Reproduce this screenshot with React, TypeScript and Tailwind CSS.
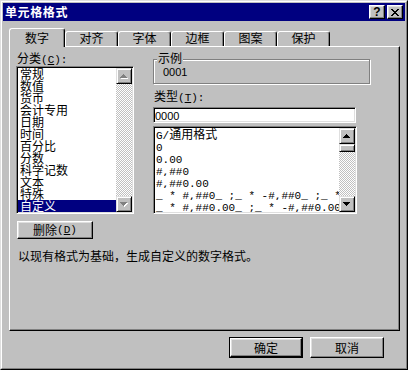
import React from "react";

const raised =
  "border border-t-white border-l-white border-r-black border-b-black shadow-[inset_-1px_-1px_0_#808080,inset_1px_1px_0_#dfdfdf]";
const sunken =
  "border border-t-[#808080] border-l-[#808080] border-r-white border-b-white shadow-[inset_1px_1px_0_#000,inset_-1px_-1px_0_#dfdfdf]";
const sbBtn =
  "w-4 h-4 shrink-0 bg-[#c0c0c0] border border-t-[#dfdfdf] border-l-[#dfdfdf] border-r-black border-b-black shadow-[inset_1px_1px_0_#fff,inset_-1px_-1px_0_#808080] flex items-center justify-center";
const thumb =
  "w-4 h-[8px] shrink-0 bg-[#c0c0c0] border border-t-[#dfdfdf] border-l-[#dfdfdf] border-r-black border-b-black shadow-[inset_1px_1px_0_#fff,inset_-1px_-1px_0_#808080]";
const track =
  "flex-1 bg-[image:repeating-conic-gradient(#c0c0c0_0%_25%,#ffffff_0%_50%)] bg-[length:2px_2px]";
const mono = "font-['Liberation_Mono',monospace] text-[11px]";
const sans = "font-['Liberation_Sans',sans-serif] text-[11px]";

function Arrow({ down, disabled }: { down?: boolean; disabled?: boolean }) {
  const d = down
    ? "M0 0H7V1H6V2H5V3H4V4H3V3H2V2H1V1H0Z"
    : "M3 0H4V1H5V2H6V3H7V4H0V3H1V2H2V1H3Z";
  return (
    <svg width="8" height="5" viewBox="0 0 8 5" className="block">
      {disabled && <path d={d} fill="#fff" transform="translate(1 1)" />}
      <path d={d} fill={disabled ? "#808080" : "#000"} />
    </svg>
  );
}

const xRows = ["11....11", ".11..11.", "..1111..", "...11...", "..1111..", ".11..11.", "11....11"];

function CloseGlyph() {
  return (
    <svg width="8" height="7" viewBox="0 0 8 7" className="block">
      {xRows.flatMap((row, y) =>
        row.split("").map((c, x) => (c === "1" ? <rect key={`${x}-${y}`} x={x} y={y} width="1" height="1" fill="#000" /> : null))
      )}
    </svg>
  );
}

function TitleBar() {
  return (
    <div className="h-[18px] shrink-0 bg-[#000080] flex items-center justify-between pl-[2px] pr-[2px]">
      <span className="text-white font-bold text-[12px] leading-[12px] tracking-[0.6px]">单元格格式</span>
      <div className="flex gap-[2px]">
        <div className={`w-4 h-[14px] bg-[#c0c0c0] ${raised} flex items-center justify-center`}>
          <span className="font-['Liberation_Sans',sans-serif] font-bold text-[12px] leading-none">?</span>
        </div>
        <div className={`w-4 h-[14px] bg-[#c0c0c0] ${raised} flex items-center justify-center`}>
          <CloseGlyph />
        </div>
      </div>
    </div>
  );
}

const tabs = ["数字", "对齐", "字体", "边框", "图案", "保护"];

function Tabs() {
  return (
    <div className="flex items-end h-[25px] pl-[6px] shrink-0">
      {tabs.map((t, i) =>
        i === 0 ? (
          <div
            key={t}
            className="relative z-10 -mb-px h-[19px] w-[56px] bg-[#c0c0c0] border-t border-l border-r border-t-white border-l-white border-r-black rounded-t-[3px] shadow-[inset_-1px_0_0_#808080] pt-[3px] text-center"
          >
            {t}
          </div>
        ) : (
          <div
            key={t}
            className="h-[15px] w-[53px] border-t border-l border-r border-t-white border-l-white border-r-black rounded-t-[3px] shadow-[inset_-1px_0_0_#808080] text-center"
          >
            {t}
          </div>
        )
      )}
    </div>
  );
}

const categories = ["常规", "数值", "货币", "会计专用", "日期", "时间", "百分比", "分数", "科学记数", "文本", "特殊", "自定义"];

function CategoryList() {
  return (
    <div className={`h-[148px] w-[118px] bg-white ${sunken} p-px flex`}>
      <div className="flex-1 flex flex-col">
        {categories.map((c, i) => (
          <div
            key={c}
            className={`h-[12px] pl-[2px] whitespace-nowrap ${i === categories.length - 1 ? "bg-[#000080] text-white" : ""}`}
          >
            {c}
          </div>
        ))}
      </div>
      <div className="w-4 flex flex-col">
        <div className={sbBtn}>
          <Arrow disabled />
        </div>
        <div className={track} />
        <div className={sbBtn}>
          <Arrow down disabled />
        </div>
      </div>
    </div>
  );
}

const formats: React.ReactNode[] = [
  <>
    <span className={mono}>G/</span>通用格式
  </>,
  <span className={mono}>0</span>,
  <span className={mono}>0.00</span>,
  <span className={mono}>#,##0</span>,
  <span className={mono}>#,##0.00</span>,
  <span className={mono}>{'_ * #,##0_ ;_ * -#,##0_ ;_ * "-"_ ;_ @_ '}</span>,
  <span className={mono}>{'_ * #,##0.00_ ;_ * -#,##0.00_ ;_ * "-"??_ ;_ @_ '}</span>,
];

function FormatList() {
  return (
    <div className={`h-[88px] w-[204px] bg-white ${sunken} p-px flex`}>
      <div className="flex-1 min-w-0 flex flex-col overflow-hidden">
        {formats.map((f, i) => (
          <div key={i} className="h-[12px] pl-px whitespace-pre overflow-hidden">
            {f}
          </div>
        ))}
      </div>
      <div className="w-4 flex flex-col">
        <div className={sbBtn}>
          <Arrow />
        </div>
        <div className={thumb} />
        <div className={track} />
        <div className={sbBtn}>
          <Arrow down />
        </div>
      </div>
    </div>
  );
}

function Panel() {
  return (
    <div className="ml-[6px] w-[391px] h-[285px] shrink-0 border border-t-white border-l-white border-r-black border-b-black shadow-[inset_-1px_-1px_0_#808080] pt-[5px] pl-[6px] flex flex-col">
      <div className="flex gap-[19px]">
        <div className="flex flex-col">
          <div className="h-[14px] pl-px whitespace-nowrap">
            分类<span className={mono}>(<u>C</u>):</span>
          </div>
          <CategoryList />
        </div>
        <div className="flex flex-col">
          <div className="relative mt-[7px] h-[25px] w-[217px] border border-[#808080] shadow-[inset_1px_1px_0_#fff,1px_1px_0_#fff] pl-[9px] pt-[5px]">
            <span className="absolute left-[3px] top-[-8px] px-px bg-[#c0c0c0]">示例</span>
            <span className={sans}>0001</span>
          </div>
          <div className="mt-[6px] h-[12px] pl-px whitespace-nowrap">
            类型<span className={mono}>(<u>T</u>):</span>
          </div>
          <div className={`mt-[5px] h-[16px] w-[203px] bg-white ${sunken} pl-px pt-px`}>
            <span className={sans}>0000</span>
          </div>
          <div className="mt-[3px]">
            <FormatList />
          </div>
        </div>
      </div>
      <div className={`mt-[7px] ml-px h-[18px] w-[76px] ${raised} flex items-center justify-center whitespace-nowrap`}>
        删除<span className={mono}>(<u>D</u>)</span>
      </div>
      <div className="mt-[11px] pl-[2px] whitespace-nowrap">以现有格式为基础，生成自定义的数字格式。</div>
    </div>
  );
}

export default function App() {
  return (
    <div className="w-[408px] h-[370px] border border-t-[#dfdfdf] border-l-[#dfdfdf] border-r-black border-b-black bg-[#c0c0c0] font-['Noto_Sans_CJK_SC',sans-serif] text-[12px] leading-[12px] text-black select-none">
      <div className="h-full border border-t-white border-l-white border-r-[#808080] border-b-[#808080] p-px flex flex-col">
        <TitleBar />
        <Tabs />
        <Panel />
        <div className="mt-[6px] flex justify-end gap-[7px] pr-[21px]">
          <div className="w-[74px] h-[21px] border border-black">
            <div className={`h-full ${raised} flex items-center justify-center`}>确定</div>
          </div>
          <div className={`w-[74px] h-[21px] ${raised} flex items-center justify-center`}>取消</div>
        </div>
      </div>
    </div>
  );
}
